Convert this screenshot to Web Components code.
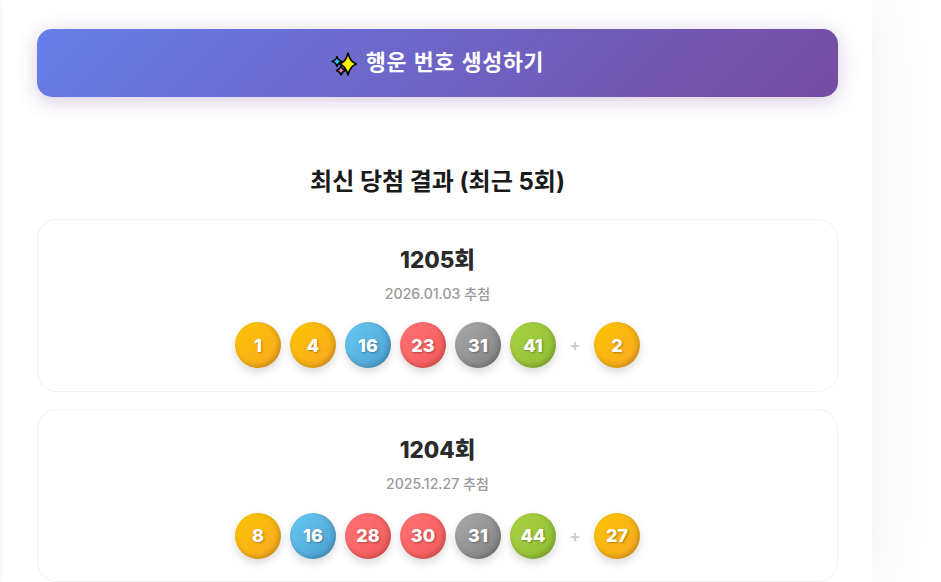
<!DOCTYPE html>
<html lang="ko"><head><meta charset="utf-8"><title>로또</title>
<style>
html,body{margin:0;height:582px;overflow:hidden;background:#fff;font-family:Inter,"Noto Sans CJK KR",sans-serif}
</style></head><body>
<lotto-page>
  <generate-button>행운 번호 생성하기</generate-button>
  <section-title>최신 당첨 결과 (최근 5회)</section-title>
  <draw-card round="1205회" date="2026.01.03 추첨" nums="1,4,16,23,31,41" bonus="2"></draw-card>
  <draw-card round="1204회" date="2025.12.27 추첨" nums="8,16,28,30,31,44" bonus="27"></draw-card>
</lotto-page>
<script>
class LottoPage extends HTMLElement{constructor(){super();this.attachShadow({mode:'open'}).innerHTML=`<style>
:host{display:block;margin-left:3px;width:869px;height:582px;box-sizing:border-box;padding:29px 34px 0;background:#fff;box-shadow:0 0 60px rgba(0,0,0,.08);overflow:visible}
.w{display:flex;flex-direction:column}
</style><div class="w"><slot></slot></div>`}}
class GenerateButton extends HTMLElement{constructor(){super();this.attachShadow({mode:'open'}).innerHTML=`<style>
:host{display:flex;align-items:center;justify-content:center;gap:9px;height:68px;border-radius:15px;background:linear-gradient(135deg,#667eea 0%,#764ba2 100%);box-shadow:0 4px 20px rgba(118,75,162,.3);color:#fff;font-size:21.6px;font-weight:700;letter-spacing:.7px;word-spacing:1px;line-height:1}
svg{width:26px;height:26px;flex:none;margin-top:2px}
span{display:block;margin-top:-1px}
</style><svg viewBox="0 0 26 26"><path d="M6 5.500Q7 9.500 11 10.500 7 11.500 6 15.500 5 11.500 1 10.500 5 9.500 6 5.500z" fill="#29c5f2" stroke="#000" stroke-width="1.400" stroke-linejoin="round"/><path d="M10 15Q11 18.500 14.500 19.500 11 20.500 10 24 9 20.500 5.500 19.500 9 18.500 10 15z" fill="#ee82b4" stroke="#000" stroke-width="1.400" stroke-linejoin="round"/><path d="M17 2Q19 11 25.500 13 19 15 17 24 15 15 8.500 13 15 11 17 2z" fill="#fff200" stroke="#000" stroke-width="1.500" stroke-linejoin="round"/></svg><span><slot></slot></span>`}}
class SectionTitle extends HTMLElement{constructor(){super();this.attachShadow({mode:'open'}).innerHTML=`<style>
:host{display:block;margin-top:67px;margin-bottom:19px;line-height:36px;text-align:center;font-size:24px;font-weight:700;color:#1a1a1a}
</style><slot></slot>`}}
class LottoBall extends HTMLElement{constructor(){super();this.attachShadow({mode:'open'}).innerHTML=`<style>
:host{display:flex;align-items:center;justify-content:center;width:46px;height:46px;border-radius:50%;color:#fff;font-size:18px;font-weight:800;text-shadow:1px 1px 2px rgba(0,0,0,.3);box-shadow:0 4px 8px rgba(0,0,0,.15),inset -2px -2px 5px rgba(0,0,0,.2)}
:host([c=y]){background:linear-gradient(135deg,#fbc400,#f9a825)}
:host([c=b]){background:linear-gradient(135deg,#69c8f2,#4a9fd0)}
:host([c=r]){background:linear-gradient(135deg,#ff7272,#f55a5a)}
:host([c=g]){background:linear-gradient(135deg,#aaa,#808080)}
:host([c=n]){background:linear-gradient(135deg,#a8d240,#90bd36)}
</style><slot></slot>`}}
class DrawCard extends HTMLElement{constructor(){super();const s=this.attachShadow({mode:'open'});
const col=n=>n<=10?'y':n<=20?'b':n<=30?'r':n<=40?'g':'n';
const ball=n=>`<lotto-ball c="${col(+n)}">${n}</lotto-ball>`;
s.innerHTML=`<style>
:host{display:flex;flex-direction:column;align-items:center;box-sizing:border-box;height:173px;border:1px solid #f0f0f0;border-radius:20px;background:#fff;margin-bottom:17.4px;padding-top:22px}
.t{font-size:22.4px;font-weight:800;color:#2a2a2a;line-height:36px}
.d{font-size:14.1px;color:#999;font-weight:500;line-height:20px;margin-top:6px}
.b{display:flex;align-items:center;gap:9px;margin-top:18.2px}
.p{width:20px;text-align:center;color:#ccc;font-size:17px;font-weight:600}
</style><div class="t">${this.getAttribute('round')}</div><div class="d">${this.getAttribute('date')}</div><div class="b">${this.getAttribute('nums').split(',').map(ball).join('')}<span class="p">+</span><lotto-ball c="y">${this.getAttribute('bonus')}</lotto-ball></div>`}}
customElements.define('lotto-ball',LottoBall);
customElements.define('lotto-page',LottoPage);
customElements.define('generate-button',GenerateButton);
customElements.define('section-title',SectionTitle);
customElements.define('draw-card',DrawCard);
</script></body></html>
